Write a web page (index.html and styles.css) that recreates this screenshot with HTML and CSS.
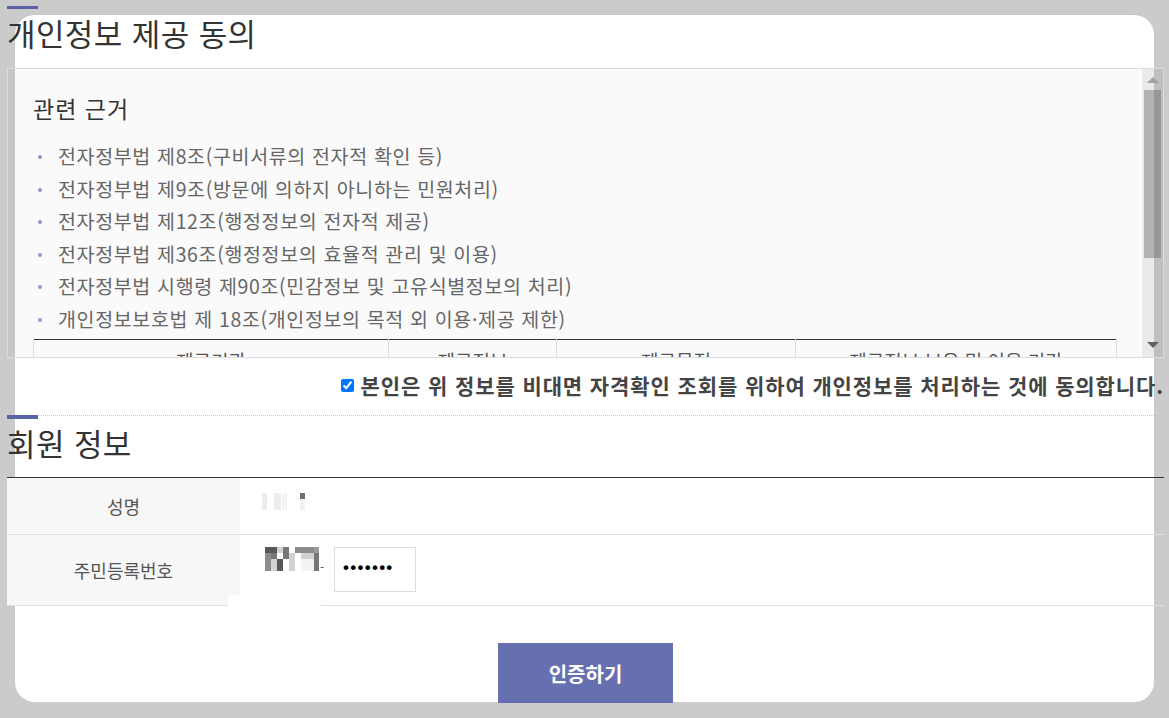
FILE: index.html
```html
<!DOCTYPE html>
<html lang="ko">
<head>
<meta charset="utf-8">
<title>개인정보 제공 동의</title>
<link rel="stylesheet" href="styles.css">
</head>
<body>
<div class="card">
  <div class="content">
    <section class="sec sec-consent">
      <div class="bar"></div>
      <h2 class="sec-title">개인정보 제공 동의</h2>
      <div class="terms">
        <div class="terms-body">
          <h3 class="terms-head">관련 근거</h3>
          <ul class="law-list">
            <li>전자정부법 제8조(구비서류의 전자적 확인 등)</li>
            <li>전자정부법 제9조(방문에 의하지 아니하는 민원처리)</li>
            <li>전자정부법 제12조(행정정보의 전자적 제공)</li>
            <li>전자정부법 제36조(행정정보의 효율적 관리 및 이용)</li>
            <li>전자정부법 시행령 제90조(민감정보 및 고유식별정보의 처리)</li>
            <li>개인정보보호법 제 18조(개인정보의 목적 외 이용·제공 제한)</li>
          </ul>
          <table class="provide">
            <colgroup>
              <col class="c1"><col class="c2"><col class="c3"><col class="c4">
            </colgroup>
            <thead>
              <tr><th>제공기관</th><th>제공정보</th><th>제공목적</th><th>제공정보 보유 및 이용 기간</th></tr>
            </thead>
          </table>
        </div>
        <div class="scrollbar">
          <span class="arrow up"></span>
          <span class="track"><span class="thumb"></span></span>
          <span class="arrow down"></span>
        </div>
      </div>
      <label class="agree"><input type="checkbox" class="agree-box" checked><span>본인은 위 정보를 비대면 자격확인 조회를 위하여 개인정보를 처리하는 것에 동의합니다.</span></label>
    </section>

    <section class="sec sec-member">
      <div class="bar"></div>
      <h2 class="sec-title">회원 정보</h2>
      <div class="member-wrap">
        <table class="member">
          <tr class="row-name">
            <th>성명</th>
            <td>
              <span class="mosaic name-mosaic">
                <span class="px a"></span><span class="px b"></span><span class="px c"></span><span class="px d"></span><span class="px e"></span><span class="px f"></span>
              </span>
            </td>
          </tr>
          <tr class="row-rrn">
            <th>주민등록번호</th>
            <td>
              <div class="rrn">
                <span class="mosaic rrn-mosaic">
                  <span class="k1"></span><span class="k1"></span><span class="k4"></span><span class="k2"></span><span class="k0"></span><span class="k3"></span><span class="k3"></span><span class="k5"></span>
                  <span class="k3"></span><span class="k2"></span><span class="k0"></span><span class="k2"></span><span class="k4"></span><span class="k0"></span><span class="k4"></span><span class="k2"></span>
                  <span class="k3"></span><span class="k4"></span><span class="k1"></span><span class="k0"></span><span class="k4"></span><span class="k0"></span><span class="k6"></span><span class="k2"></span>
                </span>
                <span class="dash">-</span>
                <span class="rrn-input">•••••••</span>
              </div>
            </td>
          </tr>
        </table>
        <div class="redact"></div>
      </div>
      <div class="actions">
        <button class="btn" type="button">인증하기</button>
      </div>
    </section>
  </div>
</div>
</body>
</html>
```

FILE: styles.css
```css
html, body {
  margin: 0;
  padding: 0;
}
body {
  background: #cbcbcb;
  font-family: "Noto Sans CJK KR", "Noto Sans", sans-serif;
  color: #333;
  overflow: hidden;
  height: 718px;
}

.card {
  display: flow-root;
  margin: 15px;
  height: 687px;
  background: #fff;
  border-radius: 20px;
}

.content {
  margin: -9px -10px 0 -8px;
}

.bar {
  width: 31px;
  height: 3px;
  background: #5a62a3;
}

.sec-title {
  margin: 6px 0 0 0;
  font-size: 31px;
  letter-spacing: 0.4px;
  line-height: 36px;
  font-weight: 400;
  color: #333;
}

/* consent box */
.terms {
  display: flex;
  margin-top: 17px;
  height: 288px;
  border: 1px solid #dcdcdc;
  background: rgba(0, 0, 0, 0.02);
  overflow: hidden;
}
.terms-body {
  flex: 1;
  padding: 24px 25px 0 25px;
  overflow: hidden;
}
.terms-head {
  margin: 0;
  font-size: 23px;
  letter-spacing: 1px;
  line-height: 30px;
  font-weight: 400;
  color: #333;
}
.law-list {
  list-style: none;
  margin: 17px 0 0 0;
  padding: 0;
}
.law-list li {
  position: relative;
  padding-left: 25px;
  font-size: 19.5px;
  letter-spacing: 0.65px;
  line-height: 32.6px;
  color: #666;
  white-space: nowrap;
}
.law-list li::before {
  content: "";
  position: absolute;
  left: 5px;
  top: 15px;
  width: 4px;
  height: 4px;
  border-radius: 2px;
  background: #9197c6;
}

.provide {
  width: 100%;
  margin-top: 3px;
  border-collapse: collapse;
  table-layout: fixed;
  border-top: 1px solid #333;
}
.provide .c1 { width: 355px; }
.provide .c2 { width: 168px; }
.provide .c3 { width: 239px; }
.provide th {
  border: 1px solid #dcdcdc;
  border-top: 0;
  background: #fafafa;
  font-size: 19px;
  font-weight: 400;
  color: #555;
  text-align: center;
  padding: 11px 8px 0;
  line-height: 20px;
  white-space: nowrap;
}

/* fake scrollbar */
.scrollbar {
  width: 21px;
  display: flex;
  flex-direction: column;
  align-items: center;
  background: rgba(150, 150, 150, 0.15);
}
.arrow {
  width: 0;
  height: 0;
  border-left: 6px solid transparent;
  border-right: 6px solid transparent;
}
.arrow.up {
  margin-top: 8px;
  border-bottom: 6px solid #a3a3a3;
}
.arrow.down {
  margin-bottom: 9px;
  border-top: 6px solid #606060;
}
.track {
  flex: 1;
  align-self: stretch;
  padding: 7px 2px 0 2px;
}
.thumb {
  display: block;
  height: 168px;
  background: rgba(85, 85, 85, 0.37);
}

/* agree line */
.agree {
  display: flex;
  justify-content: flex-end;
  align-items: center;
  margin: 14px 0 0 0;
  height: 26px;
  font-size: 21px;
  letter-spacing: 0.9px;
  font-weight: 700;
  color: #444;
  white-space: nowrap;
}
.agree-box {
  width: 13px;
  height: 13px;
  margin: 0 7px 0 0;
  flex: none;
}

/* member section */
.sec-member {
  margin-top: 17px;
  border-top: 1px dotted #c8c8c8;
}
.sec-member .bar {
  margin-top: -1px;
  height: 4px;
}
.sec-member .sec-title {
  margin-top: 6px;
}

.member-wrap {
  position: relative;
  margin-top: 16px;
}
.member {
  width: 100%;
  border-collapse: collapse;
  border-top: 1px solid #333;
}
.member th,
.member td {
  border-bottom: 1px solid #e0e0e0;
  padding: 0;
}
.member th {
  width: 233px;
  background: #f7f7f7;
  font-size: 18px;
  font-weight: 400;
  color: #555;
  text-align: center;
}
.member td {
  padding-left: 22px;
}
.row-name th,
.row-name td {
  height: 56px;
}
.row-rrn th,
.row-rrn td {
  height: 70px;
}
.row-rrn td {
  padding-left: 25px;
}

.mosaic {
  display: inline-grid;
  vertical-align: middle;
}
.name-mosaic {
  grid-template-columns: 5px 5px 7px 5px 11px 5px;
  grid-template-rows: 17px;
  column-gap: 1px;
  margin-top: -14px;
}
.name-mosaic .px { background: #fff; }
.name-mosaic .a { background: #ececec; }
.name-mosaic .b { background: #fff; }
.name-mosaic .c { background: #ededed; }
.name-mosaic .d { background: #f4f4f4; }
.name-mosaic .e { background: #fff; }
.name-mosaic .f { background: linear-gradient(#707070 0 6px, #f2f2f2 6px); }

.rrn {
  display: flex;
  align-items: flex-start;
  margin-top: -2px;
}
.rrn-mosaic {
  grid-template-columns: repeat(6, 6px) 13px 5px;
  grid-template-rows: 6px 6px 12px;
}
.k0 { background: #fff; }
.k1 { background: #585858; }
.k2 { background: #777; }
.k3 { background: #8c8c8c; }
.k4 { background: #d2d2d2; }
.k5 { background: #9a9a9a; }
.k6 { background: #f3f3f3; }
.dash {
  font-size: 12px;
  line-height: 14px;
  color: #555;
  margin: 13px 10px 0 1px;
}
.rrn-input {
  display: flex;
  align-items: center;
  box-sizing: border-box;
  width: 82px;
  height: 45px;
  padding: 0 0 2px 6px;
  border: 1px solid #dcdcdc;
  font-family: "DejaVu Sans", sans-serif;
  font-size: 16px;
  letter-spacing: -2.2px;
  color: #000;
}

.redact {
  position: absolute;
  left: 221px;
  bottom: -6px;
  width: 93px;
  height: 17px;
  background: #fff;
}

.actions {
  display: flex;
  justify-content: center;
  margin-top: 37px;
}
.btn {
  width: 175px;
  height: 60px;
  border: 0;
  border-radius: 0;
  background: #6670b0;
  color: #fff;
  font-family: "Noto Sans CJK KR", sans-serif;
  font-size: 20px;
  font-weight: 700;
  padding: 0;
}
```
